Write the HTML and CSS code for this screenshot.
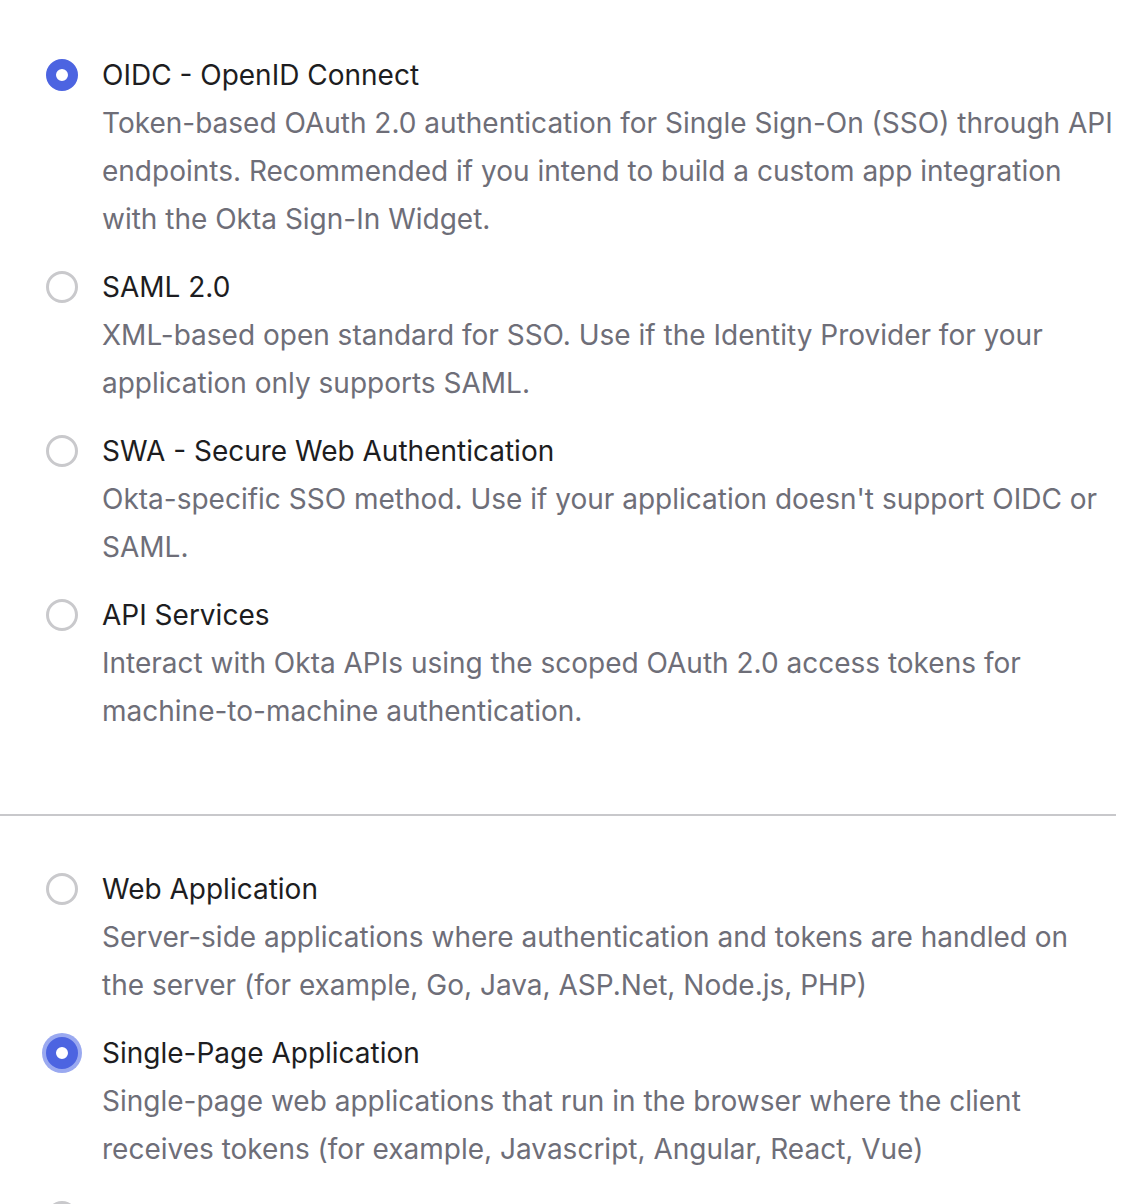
FILE: index.html
```html
<!DOCTYPE html>
<html lang="en">
<head>
    <meta charset="UTF-8">
    <meta name="viewport" content="width=device-width, initial-scale=1.0">
    <title>Create a new app integration</title>
    <link rel="stylesheet" href="styles.css">
</head>
<body>

<div class="wizard">
    <fieldset class="choice-group">
        <label class="choice">
            <input type="radio" name="signin" value="oidc" checked>
            <span class="radio"></span>
            <span class="choice-text">
                <span class="choice-title">OIDC - OpenID Connect</span>
                <span class="choice-desc">Token-based OAuth 2.0 authentication for Single Sign-On (SSO) through API endpoints. Recommended if you intend to build a custom app integration with the Okta Sign-In Widget.</span>
            </span>
        </label>
        <label class="choice">
            <input type="radio" name="signin" value="saml">
            <span class="radio"></span>
            <span class="choice-text">
                <span class="choice-title">SAML 2.0</span>
                <span class="choice-desc">XML-based open standard for SSO. Use if the Identity Provider for your application only supports SAML.</span>
            </span>
        </label>
        <label class="choice">
            <input type="radio" name="signin" value="swa">
            <span class="radio"></span>
            <span class="choice-text">
                <span class="choice-title">SWA - Secure Web Authentication</span>
                <span class="choice-desc">Okta-specific SSO method. Use if your application doesn't support OIDC or SAML.</span>
            </span>
        </label>
        <label class="choice">
            <input type="radio" name="signin" value="api">
            <span class="radio"></span>
            <span class="choice-text">
                <span class="choice-title">API Services</span>
                <span class="choice-desc">Interact with Okta APIs using the scoped OAuth 2.0 access tokens for machine-to-machine authentication.</span>
            </span>
        </label>
    </fieldset>

    <hr class="divider">

    <fieldset class="choice-group">
        <label class="choice">
            <input type="radio" name="apptype" value="web">
            <span class="radio"></span>
            <span class="choice-text">
                <span class="choice-title">Web Application</span>
                <span class="choice-desc">Server-side applications where authentication and tokens are handled on the server (for example, Go, Java, ASP.Net, Node.js, PHP)</span>
            </span>
        </label>
        <label class="choice focused">
            <input type="radio" name="apptype" value="spa" checked>
            <span class="radio"></span>
            <span class="choice-text">
                <span class="choice-title">Single-Page Application</span>
                <span class="choice-desc">Single-page web applications that run in the browser where the client receives tokens (for example, Javascript, Angular, React, Vue)</span>
            </span>
        </label>
        <label class="choice">
            <input type="radio" name="apptype" value="native">
            <span class="radio"></span>
            <span class="choice-text">
                <span class="choice-title">Native Application</span>
                <span class="choice-desc">Desktop or mobile applications that run natively on a device.</span>
            </span>
        </label>
    </fieldset>
</div>

</body>
</html>
```

FILE: styles.css
```css
body {
    font-family: 'Inter', 'Noto Sans', sans-serif;
    background: #fff;
    color: #1d1d21;
    margin: 0;
    padding: 0;
}

.wizard {
    width: 1116px;
    padding-top: 51px;
}

.choice-group {
    border: none;
    margin: 0;
    padding: 0 0 0 46px;
    display: flex;
    flex-direction: column;
    gap: 20px;
}

.choice {
    display: flex;
    gap: 24px;
    cursor: pointer;
    font-size: 28px;
    line-height: 48px;
}

.choice input {
    position: absolute;
    opacity: 0;
    width: 0;
    height: 0;
}

.radio {
    flex: none;
    box-sizing: border-box;
    width: 32px;
    height: 32px;
    margin-top: 8px;
    border-radius: 50%;
    border: 3px solid #c9c9cc;
    background: #fff;
}

.choice input:checked + .radio {
    border: 10px solid #4c64e1;
}

.choice.focused .radio {
    box-shadow: 0 0 0 4px #9aa9f0;
}

.choice-text {
    display: flex;
    flex-direction: column;
}

.choice-title {
    color: #1d1d21;
}

.choice-desc {
    color: #6e6e78;
}

.divider {
    border: none;
    border-top: 2px solid #c8c8cb;
    margin: 79px 0 49px;
}
```
